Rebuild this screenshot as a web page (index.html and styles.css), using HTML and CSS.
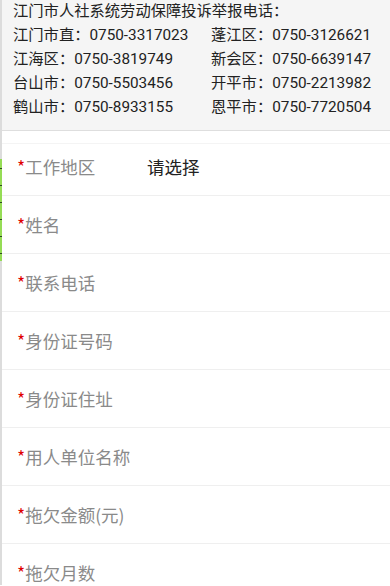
FILE: index.html
```html
<!DOCTYPE html>
<html lang="zh-CN">
<head>
<meta charset="utf-8">
<link rel="stylesheet" href="styles.css">
</head>
<body>
<div class="page">
  <div class="notice">
    <div class="title">江门市人社系统劳动保障投诉举报电话：</div>
    <div class="grid">
      <span>江门市直：0750-3317023</span><span>蓬江区：0750-3126621</span>
      <span>江海区：0750-3819749</span><span>新会区：0750-6639147</span>
      <span>台山市：0750-5503456</span><span>开平市：0750-2213982</span>
      <span>鹤山市：0750-8933155</span><span>恩平市：0750-7720504</span>
    </div>
  </div>
  <div class="spacer"></div>
  <div class="form">
    <div class="row first"><span class="label"><i>*</i>工作地区</span><span class="value">请选择</span></div>
    <div class="row"><span class="label"><i>*</i>姓名</span></div>
    <div class="row"><span class="label"><i>*</i>联系电话</span></div>
    <div class="row"><span class="label"><i>*</i>身份证号码</span></div>
    <div class="row"><span class="label"><i>*</i>身份证住址</span></div>
    <div class="row"><span class="label"><i>*</i>用人单位名称</span></div>
    <div class="row"><span class="label"><i>*</i>拖欠金额(元)</span></div>
    <div class="row"><span class="label"><i>*</i>拖欠月数</span></div>
  </div>
  <div class="edge-strip"></div>
</div>
</body>
</html>
```

FILE: styles.css
```css
html, body {
  margin: 0;
  padding: 0;
  background: #ffffff;
  overflow: hidden;
}
body {
  font-family: Roboto, "Noto Sans CJK SC", sans-serif;
}
.page {
  position: relative;
  width: 390px;
  height: 586px;
  box-sizing: border-box;
  border-left: 2px solid #dcdcdc;
}
.notice {
  background: #f5f5f5;
  border-bottom: 1px solid #dedede;
  height: 131px;
  padding-left: 11px;
  color: #222222;
  font-size: 15.3px;
  line-height: 24px;
}
.title {
  margin-top: -1.5px;
  white-space: nowrap;
}
.grid {
  display: grid;
  grid-template-columns: 198px auto;
  white-space: nowrap;
}
.spacer {
  height: 12px;
  border-bottom: 1px solid #f4f4f4;
}
.row {
  height: 58px;
  box-sizing: border-box;
  border-bottom: 1px solid #efefef;
  display: flex;
  align-items: center;
  padding-left: 15px;
  font-family: "Noto Sans CJK SC", sans-serif;
  font-size: 17.5px;
}
.row.first {
  height: 52px;
  padding-bottom: 6px;
}
.label {
  color: #8a8a8a;
  width: 130px;
  flex: none;
}
.label i {
  font-style: normal;
  color: #e00000;
}
.value {
  color: #222222;
}
.edge-strip {
  position: absolute;
  left: -2px;
  top: 160px;
  width: 2px;
  height: 102px;
  background: repeating-linear-gradient(#95dc55 0 9px, #2c4a20 9px 10px, #95dc55 10px 17px);
}
```
